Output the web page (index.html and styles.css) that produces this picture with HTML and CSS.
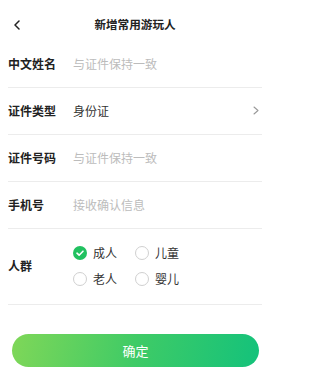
FILE: index.html
```html
<!DOCTYPE html>
<html lang="zh">
<head>
<meta charset="utf-8">
<link rel="stylesheet" href="styles.css">
</head>
<body>
<div class="page">
  <header class="topbar">
    <span class="back">
      <svg width="8" height="10" viewBox="0 0 8 10"><path d="M6 1 L2 5 L6 9" fill="none" stroke="#222" stroke-width="1.5" stroke-linecap="round" stroke-linejoin="round"/></svg>
    </span>
    <h1 class="title">新增常用游玩人</h1>
  </header>
  <div class="form">
    <div class="row">
      <span class="label">中文姓名</span>
      <span class="placeholder">与证件保持一致</span>
    </div>
    <div class="row">
      <span class="label">证件类型</span>
      <span class="value">身份证</span>
      <span class="chevron">
        <svg width="6" height="9" viewBox="0 0 6 9"><path d="M1 1 L5 4.5 L1 8" fill="none" stroke="#999" stroke-width="1.1" stroke-linecap="round" stroke-linejoin="round"/></svg>
      </span>
    </div>
    <div class="row">
      <span class="label">证件号码</span>
      <span class="placeholder">与证件保持一致</span>
    </div>
    <div class="row">
      <span class="label">手机号</span>
      <span class="placeholder">接收确认信息</span>
    </div>
    <div class="row row-group">
      <span class="label">人群</span>
      <div class="options">
        <div class="option"><span class="radio checked"><svg width="14" height="14" viewBox="0 0 14 14"><circle cx="7" cy="7" r="7" fill="#21c160"/><path d="M4 7.2 L6.1 9.2 L10 5.2" fill="none" stroke="#fff" stroke-width="1.6" stroke-linecap="round" stroke-linejoin="round"/></svg></span><span class="opt-text">成人</span></div>
        <div class="option"><span class="radio"></span><span class="opt-text">儿童</span></div>
        <div class="option"><span class="radio"></span><span class="opt-text">老人</span></div>
        <div class="option"><span class="radio"></span><span class="opt-text">婴儿</span></div>
      </div>
    </div>
  </div>
  <div class="actions">
    <button class="confirm">确定</button>
  </div>
</div>
</body>
</html>
```
FILE: styles.css
```css
* { box-sizing: border-box; margin: 0; padding: 0; }
html, body { background: #fff; }
body {
  font-family: "Noto Sans CJK SC", "Noto Sans", sans-serif;
  color: #222;
}
.page { width: 270px; height: 384px; padding: 0 8px; }
.topbar {
  height: 41px;
  display: flex;
  align-items: center;
  justify-content: center;
  position: relative;
  padding-top: 8px;
}
.back {
  position: absolute;
  left: 5px;
  top: 20px;
  display: flex;
}
.title {
  font-size: 11.6px;
  font-weight: 700;
  color: #222;
  line-height: 1;
}
.form { display: flex; flex-direction: column; }
.row {
  height: 47px;
  border-bottom: 1px solid #ececec;
  display: flex;
  align-items: center;
  font-size: 12px;
  padding-bottom: 2px;
}
.label {
  width: 65px;
  flex: none;
  font-weight: 700;
  color: #222;
}
.placeholder { color: #bcbcbc; }
.value { color: #333; flex: 1; }
.chevron { display: flex; margin-right: 3px; }
.row-group { height: 76px; padding-bottom: 2px; }
.options {
  display: grid;
  grid-template-columns: 62px 62px;
  row-gap: 6px;
}
.option {
  display: flex;
  align-items: center;
  height: 20px;
  gap: 6px;
}
.radio {
  width: 14px;
  height: 14px;
  border-radius: 50%;
  border: 1px solid #d0d0d0;
  display: flex;
}
.radio.checked { border: none; }
.opt-text { color: #333; font-size: 12px; }
.actions { padding: 29px 3px 0 4px; }
.confirm {
  width: 247px;
  height: 33px;
  border: none;
  border-radius: 17px;
  background: linear-gradient(100deg, #7fd758 0%, #3fcb66 50%, #14c27b 100%);
  color: #fff;
  font-family: "Noto Sans CJK SC", sans-serif;
  font-size: 13px;
  display: block;
}
```
